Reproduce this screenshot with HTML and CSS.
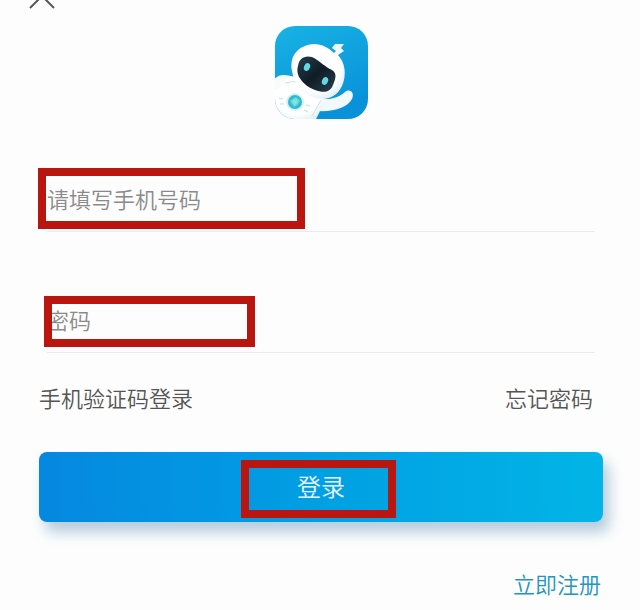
FILE: index.html
```html
<!DOCTYPE html>
<html lang="zh-CN">
<head>
<meta charset="utf-8">
<meta name="viewport" content="width=device-width, initial-scale=1">
<title>登录</title>
<link rel="stylesheet" href="styles.css">
</head>
<body>
<main class="page">
  <header class="top">
    <button class="close" type="button" aria-label="关闭">
      <svg viewBox="0 0 28 26" width="28" height="26" aria-hidden="true"><path d="M2 8 14-4 26 8" fill="none" stroke="#555659" stroke-width="2"/></svg>
    </button>
  </header>
  <svg class="logo" viewBox="0 0 93 93" aria-hidden="true">
    <defs>
      <linearGradient id="sky" x1="0" y1="0" x2="0.4" y2="1"><stop offset="0" stop-color="#18b2e5"/><stop offset="1" stop-color="#0992d9"/></linearGradient>
      <radialGradient id="shell" cx="0.45" cy="0.4" r="0.7"><stop offset="0.65" stop-color="#fff"/><stop offset="1" stop-color="#d9eaf3"/></radialGradient>
      <linearGradient id="visor" x1="0" y1="0" x2="1" y2="1"><stop offset="0" stop-color="#273f4e"/><stop offset="0.5" stop-color="#101c27"/><stop offset="1" stop-color="#29404e"/></linearGradient>
      <radialGradient id="core"><stop offset="0" stop-color="#7be6e7"/><stop offset="0.6" stop-color="#32bfd1"/><stop offset="1" stop-color="#35b5cb"/></radialGradient>
      <clipPath id="tile"><rect width="93" height="93" rx="20"/></clipPath>
    </defs>
    <g clip-path="url(#tile)">
      <rect width="93" height="93" fill="url(#sky)"/>
      <path d="M44 72C55 75 64 71 70 66 75 62 80 67 77 73 73 81 60 86 42 85Z" fill="#f1f9fc"/>
      <path d="M-2 55C6 48 12 49 21 51L50 68C49 76 46 84 40 95L-2 95Z" fill="url(#shell)"/>
      <path d="M-2 55C2 49 8 48 13 50L5 62-2 64Z" fill="#f7fbfd"/>
      <path d="M10 57Q26 52 36 65M46 74 37 90" fill="none" stroke="#c8e2ef" stroke-width="1"/>
      <path d="M17 45C14 29 24 19 39 18 47 18 54 22 59 27L61 25 57 22 60 18 69 18 66 22 69 25 63 29C70 36 72 49 67 60 61 73 47 76 35 70 25 66 19 57 17 45Z" fill="url(#shell)"/>
      <path d="M23 40C24 33 29 29 37 31 45 35 50 41 57 44 62 47 61 52 58 59 55 67 48 67 40 64 32 61 27 56 24 51 22 47 22 43 23 40Z" fill="url(#visor)"/>
      <ellipse cx="32" cy="41" rx="3" ry="4" transform="rotate(22 32 41)" fill="#61d9e2"/>
      <ellipse cx="50" cy="55" rx="3" ry="4" transform="rotate(22 50 55)" fill="#61d9e2"/>
      <circle cx="20" cy="76" r="9" fill="#d6f1f6"/>
      <circle cx="20" cy="76" r="7" fill="url(#core)"/>
      <path d="M15 75 21 71 25 75 20 81Z" fill="#8de9e5" opacity="0.6"/>
      <path d="M4 72l4 1M5 78l4 0M31 79l4 1M29 84l4 2" stroke="#b5dfed" stroke-width="1"/>
    </g>
  </svg>
  <form class="form">
    <div class="field">
      <input class="input" type="tel" placeholder="请填写手机号码" aria-label="请填写手机号码">
      <span class="mark mark-phone"></span>
    </div>
    <div class="field">
      <input class="input" type="password" placeholder="密码" aria-label="密码">
      <span class="mark mark-password"></span>
    </div>
    <nav class="links">
      <a class="link" href="#sms">手机验证码登录</a>
      <a class="link" href="#forgot">忘记密码</a>
    </nav>
    <button class="submit" type="button">登录<span class="mark mark-submit"></span></button>
  </form>
  <footer class="bottom"><a class="link register" href="#register">立即注册</a></footer>
</main>
</body>
</html>
```
FILE: styles.css
```css
* {
  box-sizing: border-box;
}

body {
  margin: 0;
  background: #fdfdfd;
  font-family: "Noto Sans CJK SC", sans-serif;
  font-weight: 350;
  font-size: 22px;
  line-height: 30px;
}

.page {
  display: flex;
  flex-direction: column;
  padding: 0 37px 10px 39px;
}

.top {
  display: flex;
  height: 26px;
  margin-left: -11px;
}

.close {
  display: flex;
  padding: 0;
  border: 0;
  background: none;
}

.logo {
  align-self: center;
  width: 93px;
  height: 93px;
}

.form {
  display: flex;
  flex-direction: column;
  margin-top: 49px;
}

.field {
  position: relative;
  margin: 0 8px 57px;
}

.input {
  display: block;
  width: 100%;
  height: 64px;
  padding: 0 0 4px;
  border: 0;
  border-bottom: 1px solid #e9ecef;
  border-radius: 0;
  outline: 0;
  background: none;
  font: inherit;
  color: #555;
}

.input::placeholder {
  color: #8a8a8a;
  opacity: 1;
}

.mark {
  position: absolute;
  border: 8px solid #b9160f;
  pointer-events: none;
}

.mark-phone {
  top: 0;
  left: -9px;
  width: 267px;
  height: 61px;
}

.mark-password {
  top: 7px;
  left: -3px;
  width: 211px;
  height: 51px;
}

.mark-submit {
  top: 8px;
  left: calc(50% - 80px);
  width: 155px;
  height: 58px;
}

.links {
  display: flex;
  justify-content: space-between;
  margin: -28px 10px 40px 0;
}

.link {
  color: #555;
  text-decoration: none;
}

.submit {
  position: relative;
  height: 70px;
  padding: 0 0 2px;
  border: 0;
  border-radius: 8px;
  background: linear-gradient(90deg, #0588e0, #019fe3 50%, #02b5e6);
  box-shadow: 6px 10px 14px rgba(70, 130, 175, 0.4);
  font: inherit;
  font-size: 24px;
  color: #e9fbff;
}

.bottom {
  display: flex;
  justify-content: flex-end;
  margin: 46px 2px 0 0;
}

.register {
  color: #2595bd;
}
```
